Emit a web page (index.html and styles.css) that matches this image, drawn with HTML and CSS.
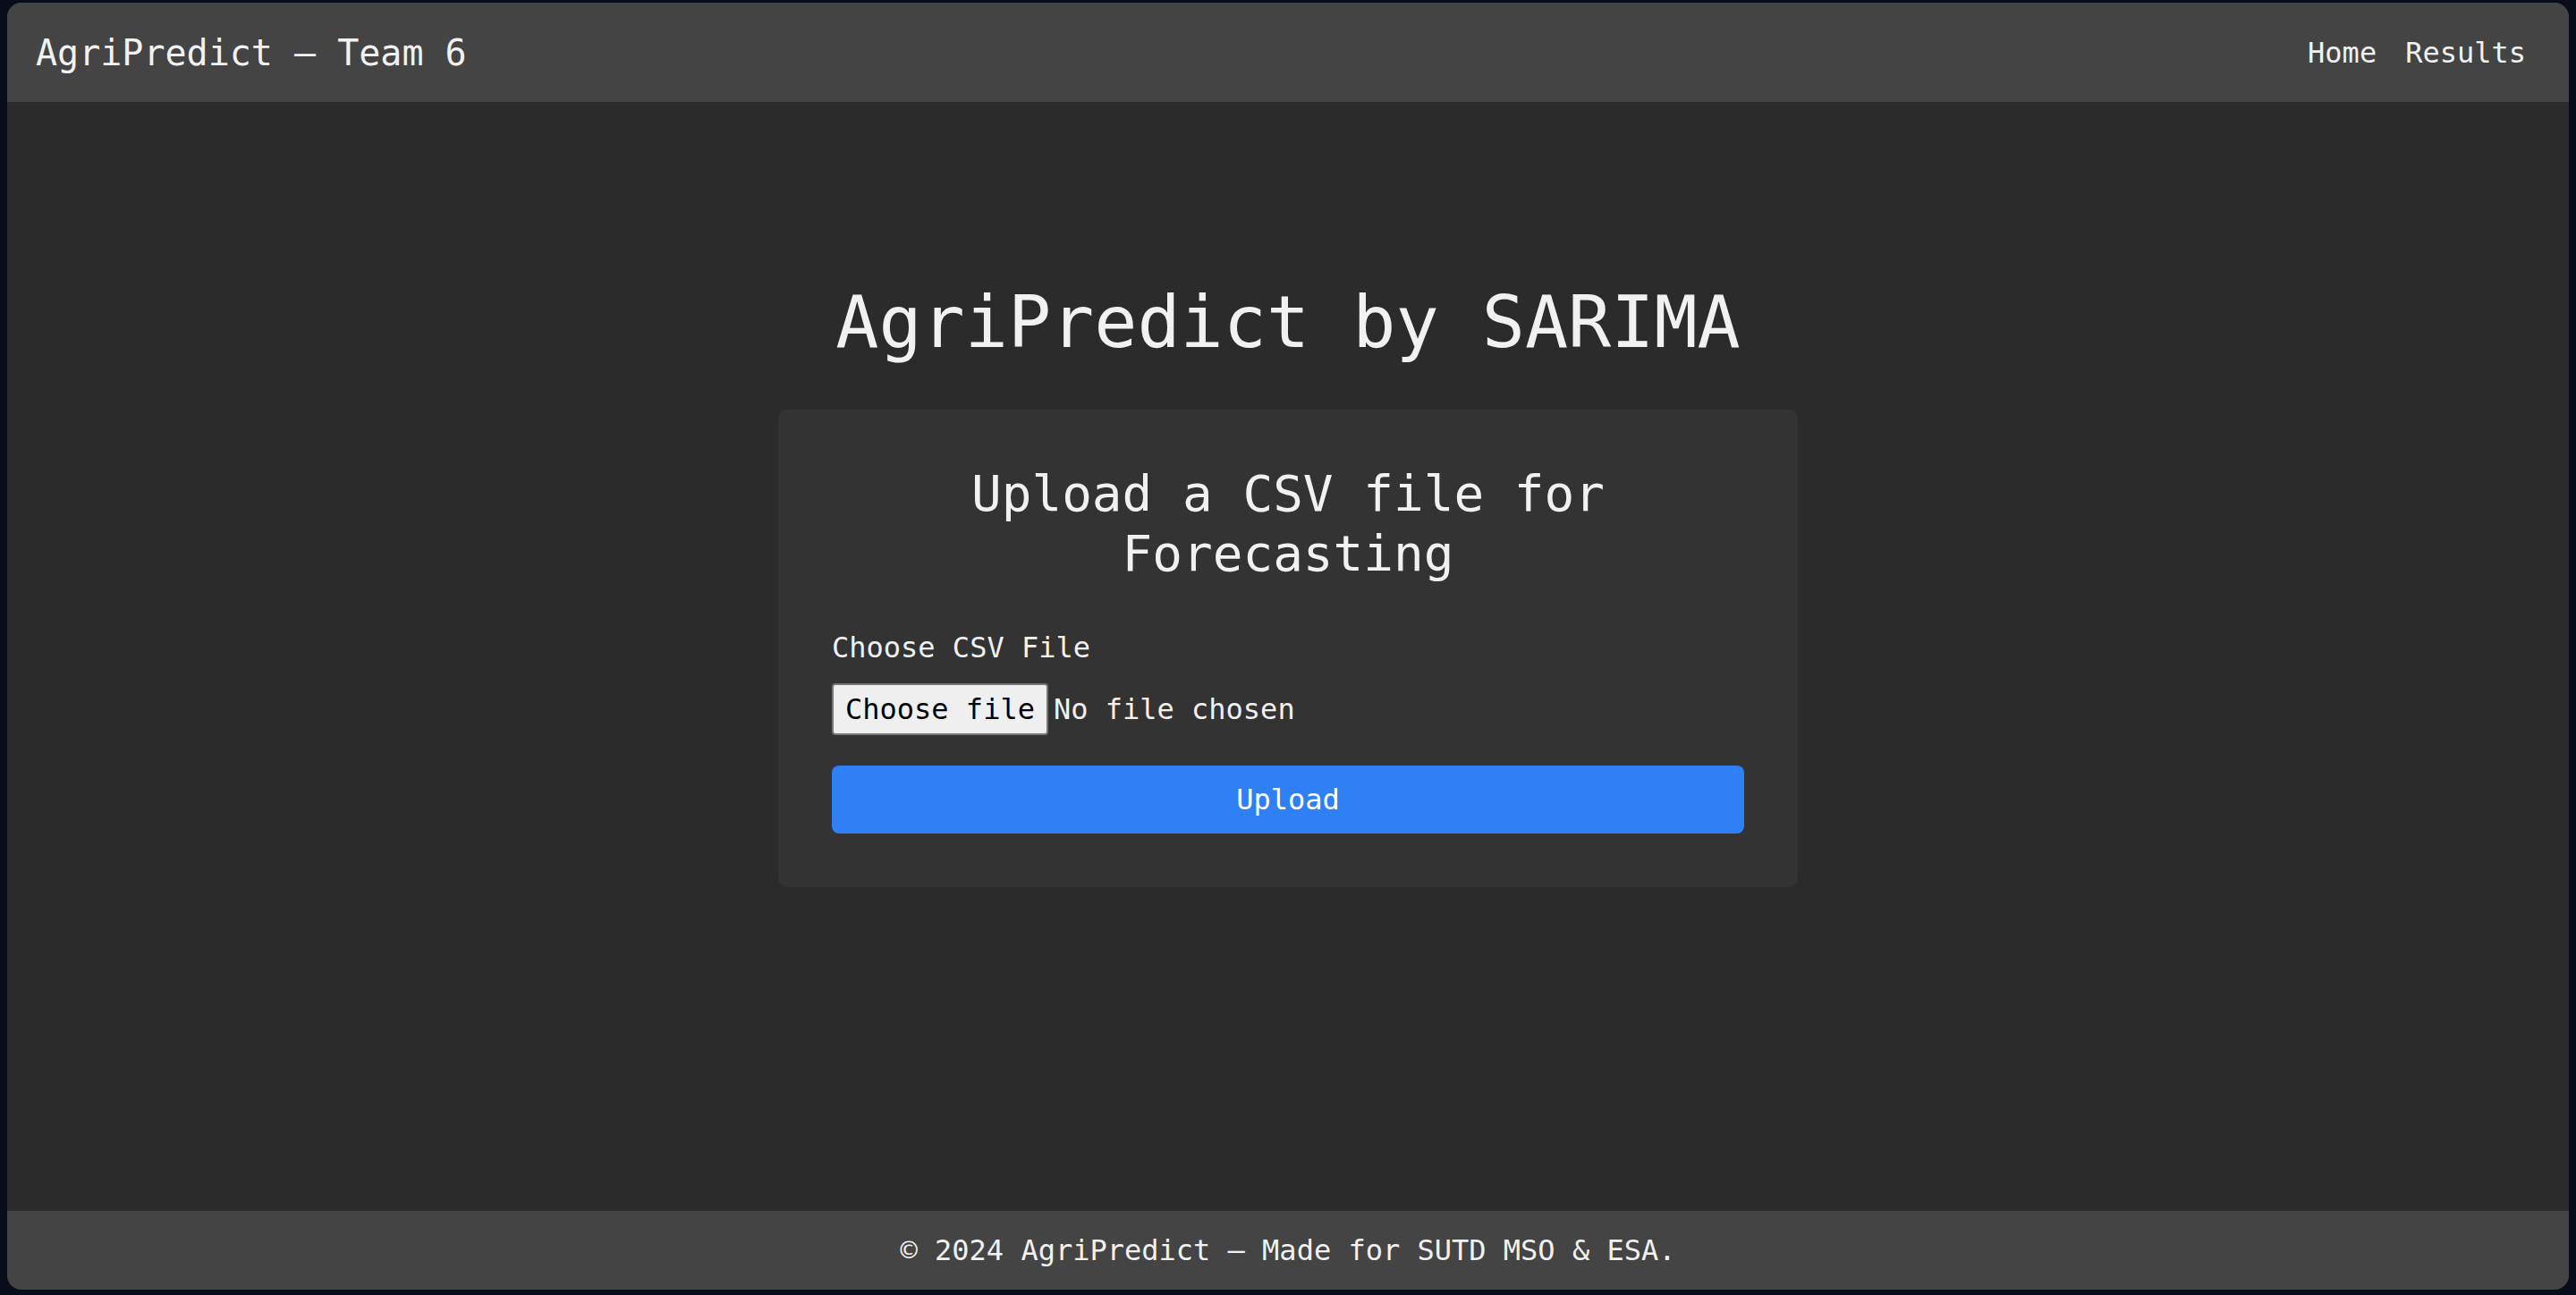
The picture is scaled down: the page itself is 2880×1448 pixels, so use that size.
FILE: index.html
```html
<!DOCTYPE html>
<html lang="en">
<head>
<meta charset="utf-8">
<title>AgriPredict</title>
<link rel="stylesheet" href="styles.css">
</head>
<body>
<div class="window">
  <header class="topbar">
    <div class="brand">AgriPredict — Team 6</div>
    <nav class="nav">
      <a href="#" class="nav-link">Home</a>
      <a href="#" class="nav-link">Results</a>
    </nav>
  </header>
  <main class="main">
    <h1 class="page-title">AgriPredict by SARIMA</h1>
    <form class="card">
      <h2 class="card-title">Upload a CSV file for Forecasting</h2>
      <div class="field-label">Choose CSV File</div>
      <div class="file-row">
        <input class="file-native" id="csv" type="file" accept=".csv">
        <label class="file-btn" for="csv">Choose file</label>
        <span class="file-status">No file chosen</span>
      </div>
      <button class="upload-btn" type="button">Upload</button>
    </form>
  </main>
  <footer class="footer">© 2024 AgriPredict — Made for SUTD MSO &amp; ESA.</footer>
</div>
</body>
</html>
```
FILE: styles.css
```css
* { box-sizing: border-box; }
html, body { height: 100%; }
body {
  margin: 0;
  padding: 3px 8px 6px 8px;
  background: #090d19;
  font-family: "DejaVu Sans Mono", "Liberation Mono", monospace;
  color: #f1f1f1;
}
.window {
  height: 100%;
  display: flex;
  flex-direction: column;
  background: #2b2b2b;
  border-radius: 16px;
  overflow: hidden;
}
.topbar {
  height: 111px;
  flex: none;
  display: flex;
  align-items: center;
  justify-content: space-between;
  padding: 0 32px;
  background: #444444;
}
.brand {
  font-size: 40px;
  color: #f1f1f1;
}
.nav { display: flex; }
.nav-link {
  font-size: 32px;
  color: #f1f1f1;
  text-decoration: none;
  padding: 0 16px;
}
.main {
  flex: 1;
  display: flex;
  flex-direction: column;
  align-items: center;
  padding-top: 199px;
}
.page-title {
  margin: 0 0 49px;
  font-size: 80px;
  font-weight: normal;
  line-height: 1.2;
  color: #f1f1f1;
}
.card {
  width: 1140px;
  padding: 60px;
  background: #333333;
  border-radius: 10px;
}
.card-title {
  margin: 0 0 48px;
  font-size: 56px;
  font-weight: normal;
  line-height: 1.2;
  text-align: center;
  color: #f1f1f1;
}
.field-label {
  font-size: 32px;
  line-height: 48px;
  margin-bottom: 16px;
  color: #f1f1f1;
}
.file-row {
  display: flex;
  align-items: center;
  margin: 0 0 34px;
  font-size: 32px;
}
.file-native { display: none; }
.file-btn {
  display: block;
  font-size: 32px;
  line-height: 38px;
  padding: 8px 13px;
  margin-right: 6px;
  background: #efefef;
  color: #000;
  border: 2px solid #767676;
  border-radius: 4px;
}
.file-status {
  color: #f1f1f1;
  line-height: 38px;
}
.upload-btn {
  display: block;
  width: 100%;
  padding: 19px 0;
  font-family: inherit;
  font-size: 32px;
  line-height: 38px;
  color: #ffffff;
  background: #2f80f4;
  border: none;
  border-radius: 8px;
}
.footer {
  height: 88px;
  flex: none;
  display: flex;
  align-items: center;
  justify-content: center;
  background: #444444;
  font-size: 32px;
  color: #f1f1f1;
}
```
